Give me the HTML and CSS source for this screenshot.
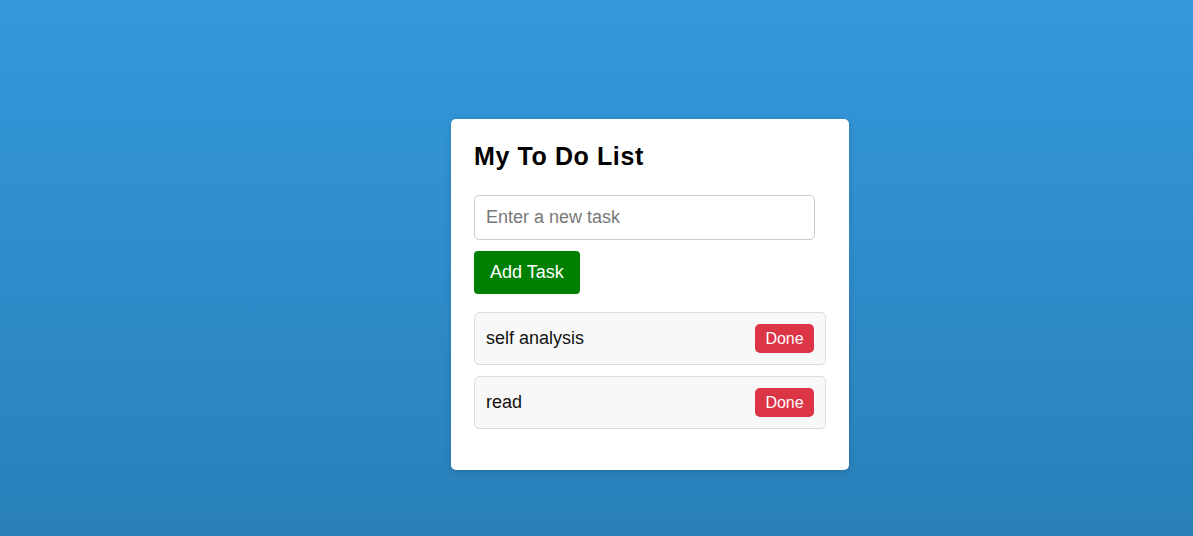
FILE: index.html
```html
<!DOCTYPE html>
<html>
<head>
<meta charset="utf-8">
<title>My To Do List</title>
<link rel="stylesheet" href="styles.css">
</head>
<body>
<main class="page">
  <section class="card">
    <h2 class="title">My To Do List</h2>
    <input class="task-input" type="text" placeholder="Enter a new task">
    <button class="add-btn">Add Task</button>
    <ul class="list">
      <li class="item"><span class="item-text">self analysis</span><button class="done-btn">Done</button></li>
      <li class="item"><span class="item-text">read</span><button class="done-btn">Done</button></li>
    </ul>
  </section>
</main>
</body>
</html>
```
FILE: styles.css
```css
html, body {
  margin: 0;
  height: 100%;
}
body {
  font-family: "Liberation Sans", Arial, sans-serif;
  background: linear-gradient(180deg, #3498db 0%, #2980b9 100%);
}
.page {
  box-sizing: border-box;
  min-height: 100vh;
  display: flex;
  justify-content: center;
  align-items: center;
  padding: 53px 0 0 107px;
}
.card {
  box-sizing: border-box;
  width: 398px;
  height: 351px;
  background: #fff;
  border-radius: 5px;
  padding: 23px;
  box-shadow: 0 2px 6px rgba(0, 0, 0, 0.15);
  display: flex;
  flex-direction: column;
  align-items: flex-start;
}
.title {
  margin: 0 0 25px;
  font-size: 25px;
  line-height: 28px;
  letter-spacing: 0.6px;
  font-weight: bold;
  color: #000;
}
.task-input {
  box-sizing: border-box;
  width: 341px;
  height: 45px;
  border: 1px solid #ccc;
  border-radius: 5px;
  padding: 0 11px;
  font-family: inherit;
  font-size: 18px;
  color: #333;
  outline: none;
}
.task-input::placeholder {
  color: #777;
}
.add-btn {
  box-sizing: border-box;
  margin-top: 11px;
  height: 43px;
  padding: 0 16px;
  border: none;
  border-radius: 4px;
  background: #008000;
  color: #fff;
  font-family: inherit;
  font-size: 18px;
}
.list {
  list-style: none;
  margin: 18px 0 0;
  padding: 0;
  width: 352px;
  display: flex;
  flex-direction: column;
  gap: 11px;
}
.item {
  box-sizing: border-box;
  height: 53px;
  display: flex;
  align-items: center;
  justify-content: space-between;
  padding: 0 11px;
  background: #f8f8f8;
  border: 1px solid #ddd;
  border-radius: 5px;
}
.item-text {
  font-size: 18px;
  color: #111;
}
.done-btn {
  box-sizing: border-box;
  width: 59px;
  height: 29px;
  border: none;
  border-radius: 5px;
  background: #dc3545;
  color: #fff;
  font-family: inherit;
  font-size: 16px;
  padding: 0;
}
```
